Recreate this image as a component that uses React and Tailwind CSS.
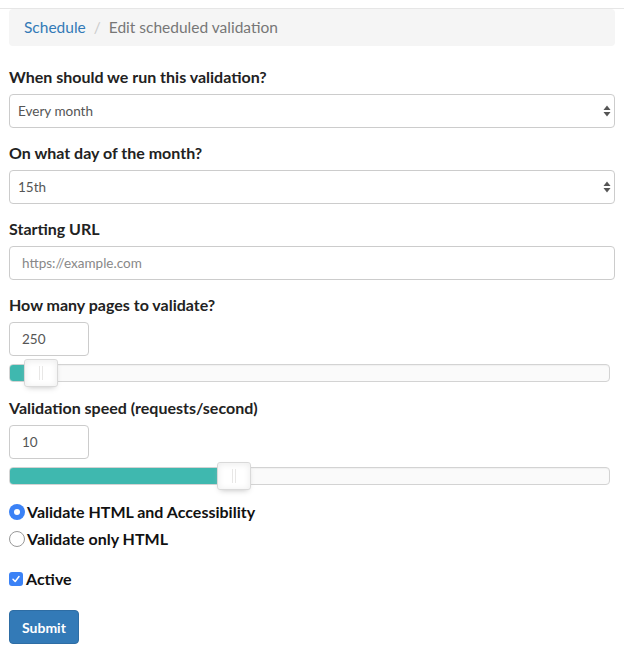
import { useState } from "react";

function SelectArrows() {
  return (
    <svg width="8" height="12" viewBox="0 0 8 12" className="pointer-events-none absolute right-[4px] top-1/2 -translate-y-1/2">
      <path d="M4 0.5 L7.5 5 L0.5 5 Z" fill="#555" />
      <path d="M4 11.5 L7.5 7 L0.5 7 Z" fill="#555" />
    </svg>
  );
}

function Select({ value, options }) {
  return (
    <div className="relative">
      <select
        defaultValue={value}
        className="block h-[34px] w-full appearance-none rounded-[4px] border border-[#ccc] bg-white pl-[8px] text-[13.5px] text-[#555] outline-none"
      >
        {options.map((o) => (
          <option key={o}>{o}</option>
        ))}
      </select>
      <SelectArrows />
    </div>
  );
}

function Slider({ percent }) {
  return (
    <div className="relative mr-[5px] h-[18px] rounded-[4px] border border-[#d3d3d3] bg-[#fafafa] shadow-[inset_0_1px_1px_#f0f0f0]">
      <div className="h-full rounded-l-[3px] bg-[#3fb8af]" style={{ width: `${percent}%` }} />
      <div
        className="absolute top-[-6px] h-[28px] w-[34px] -translate-x-1/2 rounded-[3px] border border-[#d9d9d9] bg-white shadow-[inset_0_0_1px_#fff,inset_0_1px_7px_#ebebeb,0_3px_6px_-3px_#bbb]"
        style={{ left: `${percent}%` }}
      >
        <div className="absolute left-[14px] top-[6px] h-[14px] w-px bg-[#e8e7e6]" />
        <div className="absolute left-[17px] top-[6px] h-[14px] w-px bg-[#e8e7e6]" />
      </div>
    </div>
  );
}

function Label({ children }) {
  return <label className="mb-[6px] block h-[22px] text-[16px] font-bold leading-[22px] text-[#222]">{children}</label>;
}

export default function App() {
  const [mode, setMode] = useState("full");
  const [active, setActive] = useState(true);

  return (
    <div className="min-h-[654px] bg-white font-['Lato',sans-serif] text-[#333]">
      <div className="h-[9px] border-b border-[#e6e6e6]" />
      <div className="px-[9px]">
        <ol className="flex h-[37px] items-center rounded-[4px] bg-[#f5f5f5] px-[15px] pt-px text-[15.5px]">
          <li className="text-[#337ab7]">Schedule</li>
          <li className="px-[8px] text-[#ccc]">/</li>
          <li className="text-[#777]">Edit scheduled validation</li>
        </ol>

        <form className="mt-[20px]">
          <div className="mb-[14px]">
            <Label>When should we run this validation?</Label>
            <Select value="Every month" options={["Every day", "Every week", "Every month"]} />
          </div>

          <div className="mb-[14px]">
            <Label>On what day of the month?</Label>
            <Select value="15th" options={["1st", "15th", "28th"]} />
          </div>

          <div className="mb-[14px]">
            <Label>Starting URL</Label>
            <input
              placeholder="https://example.com"
              className="block h-[34px] w-full rounded-[4px] border border-[#ccc] px-[12px] text-[13.5px] text-[#555] outline-none placeholder:text-[#888]"
            />
          </div>

          <div className="mb-[15px]">
            <Label>How many pages to validate?</Label>
            <input
              defaultValue="250"
              className="mb-[8px] block h-[34px] w-[80px] rounded-[4px] border border-[#ccc] px-[12px] text-[13.5px] text-[#555] outline-none"
            />
            <Slider percent={5.1} />
          </div>

          <div className="mb-[16px]">
            <Label>Validation speed (requests/second)</Label>
            <input
              defaultValue="10"
              className="mb-[8px] block h-[34px] w-[80px] rounded-[4px] border border-[#ccc] px-[12px] text-[13.5px] text-[#555] outline-none"
            />
            <Slider percent={37.4} />
          </div>

          <div className="flex flex-col gap-[6px]">
            <label className="flex h-[21px] items-center gap-[2px] text-[16px] font-bold text-[#111]" onClick={() => setMode("full")}>
              <span
                className={`flex h-[16px] w-[16px] items-center justify-center rounded-full ${
                  mode === "full" ? "bg-[#3b82f6]" : "border border-[#999] bg-white"
                }`}
              >
                {mode === "full" && <span className="h-[6px] w-[6px] rounded-full bg-white" />}
              </span>
              Validate HTML and Accessibility
            </label>
            <label className="flex h-[21px] items-center gap-[2px] text-[16px] font-bold text-[#111]" onClick={() => setMode("html")}>
              <span
                className={`flex h-[16px] w-[16px] items-center justify-center rounded-full ${
                  mode === "html" ? "bg-[#3b82f6]" : "border border-[#999] bg-white"
                }`}
              >
                {mode === "html" && <span className="h-[6px] w-[6px] rounded-full bg-white" />}
              </span>
              Validate only HTML
            </label>
          </div>

          <label className="mt-[19px] flex h-[21px] items-center gap-[3px] text-[16px] font-bold text-[#111]" onClick={() => setActive(!active)}>
            <span
              className={`flex h-[14px] w-[14px] items-center justify-center rounded-[3px] ${
                active ? "bg-[#3b82f6]" : "border border-[#999] bg-white"
              }`}
            >
              {active && (
                <svg width="10" height="10" viewBox="0 0 10 10">
                  <path d="M2 5.2 L4.2 7.5 L8 2.5" fill="none" stroke="#fff" strokeWidth="1.5" strokeLinecap="round" strokeLinejoin="round" />
                </svg>
              )}
            </span>
            Active
          </label>

          <button
            type="button"
            className="mt-[21px] h-[34px] rounded-[4px] border border-[#2e6da4] bg-[#337ab7] px-[12px] text-[14px] font-bold text-white"
          >
            Submit
          </button>
        </form>
      </div>
    </div>
  );
}
